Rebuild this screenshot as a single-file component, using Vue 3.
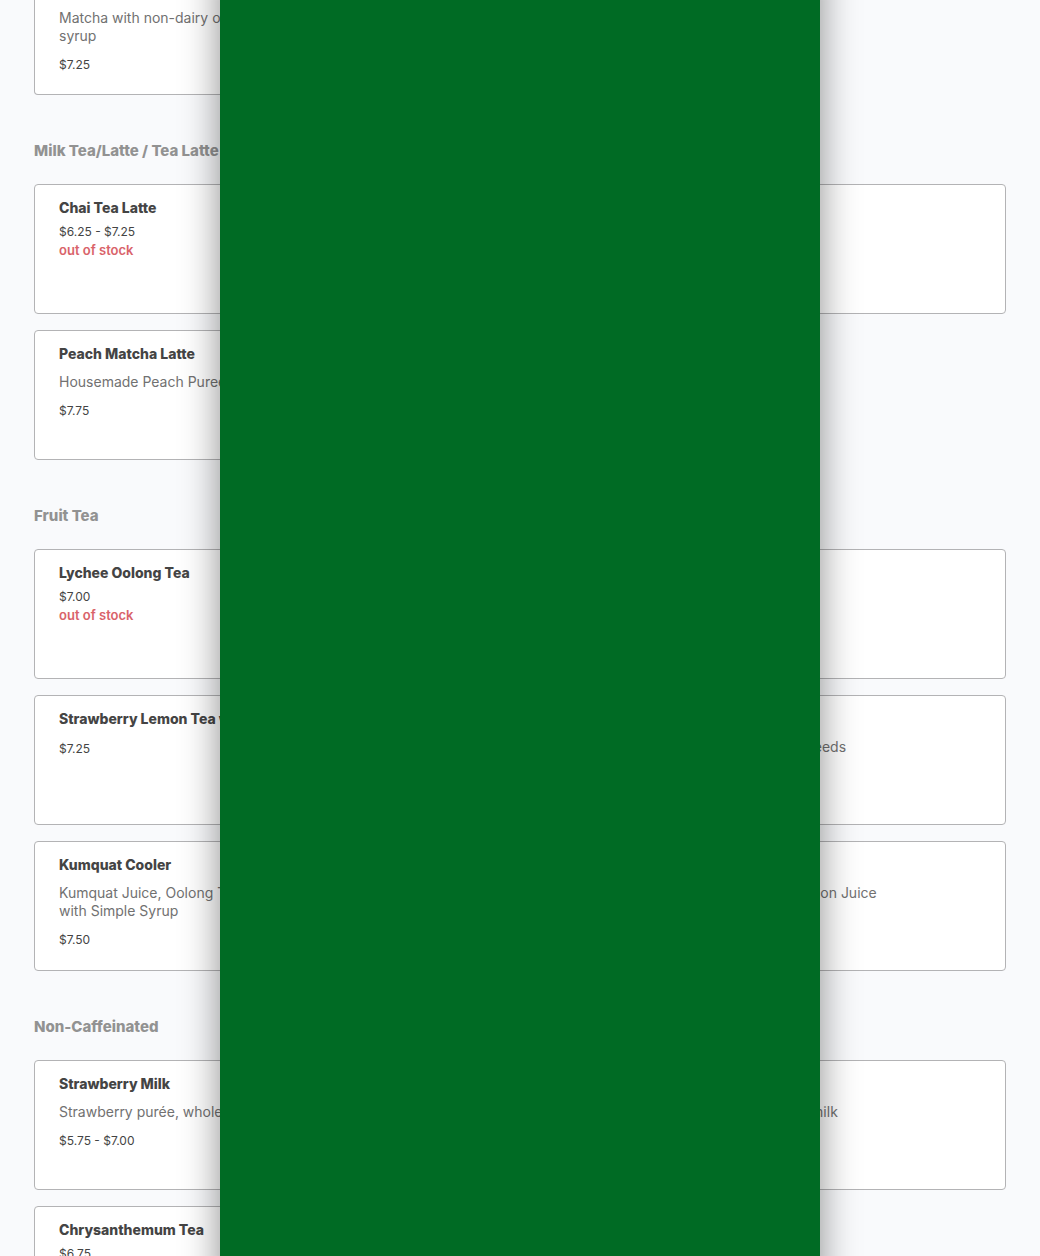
<script setup>
const sections = [
  {
    title: '',
    items: [{ continued: true, desc: 'Matcha with non-dairy oat milk and\nsyrup', price: '$7.25' }],
  },
  {
    title: 'Milk Tea/Latte / Tea Latte',
    items: [
      { name: 'Chai Tea Latte', price: '$6.25 - $7.25', soldOut: true },
      {},
      { name: 'Peach Matcha Latte', desc: 'Housemade Peach Puree', price: '$7.75' },
    ],
  },
  {
    title: 'Fruit Tea',
    items: [
      { name: 'Lychee Oolong Tea', price: '$7.00', soldOut: true },
      {},
      { name: 'Strawberry Lemon Tea with', desc: '', price: '$7.25' },
      { desc: 'Passion Fruit, Green Tea, with Lychee Seeds' },
      { name: 'Kumquat Cooler', desc: 'Kumquat Juice, Oolong Tea\nwith Simple Syrup', price: '$7.50' },
      { desc: 'Butterfly Pea Flower Tea, and Fresh Lemon Juice' },
    ],
  },
  {
    title: 'Non-Caffeinated',
    items: [
      { name: 'Strawberry Milk', desc: 'Strawberry purée, whole milk', price: '$5.75 - $7.00' },
      { desc: 'Housemade Banana purée, with whole milk' },
      { name: 'Chrysanthemum Tea', price: '$6.75' },
    ],
  },
]
</script>

<template>
  <div class="page">
    <main class="menu">
      <section v-for="(section, s) in sections" :key="s">
        <h2 v-if="section.title" class="section-title">{{ section.title }}</h2>
        <div class="grid">
          <article
            v-for="(item, i) in section.items"
            :key="i"
            class="card"
            :class="{ continued: item.continued }"
          >
            <h3 v-if="!item.continued" class="name">{{ item.name }}</h3>
            <p v-if="item.desc !== undefined" class="desc">{{ item.desc }}</p>
            <p v-if="item.price" class="price">{{ item.price }}</p>
            <p v-if="item.soldOut" class="stock">out of stock</p>
          </article>
        </div>
      </section>
    </main>
    <div class="panel" role="dialog" aria-label="Menu panel"></div>
  </div>
</template>

<style>
body {
  margin: 0;
  background: #f9fafc;
}
</style>

<style scoped>
.page {
  height: 100vh;
  overflow: hidden;
  background: #f9fafc;
  font-family: Inter, "Open Sans", sans-serif;
}
.menu {
  padding: 0 34px;
}
.section-title {
  margin: 44px 0 21px;
  font-size: 15px;
  line-height: 24px;
  font-weight: 800;
  color: #929292;
  white-space: nowrap;
}
.grid {
  display: grid;
  grid-template-columns: repeat(2, minmax(0, 1fr));
  gap: 16px;
}
.card {
  box-sizing: border-box;
  min-height: 130px;
  padding: 13px 24px;
  border: 1px solid #b3b3b5;
  border-radius: 4px;
  background: #fff;
}
.card.continued {
  min-height: 95px;
  padding-top: 0;
  border-top: 0;
  border-radius: 0 0 4px 4px;
}
.name {
  min-height: 20px;
  margin: 0 0 4px;
  font-size: 14px;
  line-height: 20px;
  font-weight: 800;
  color: #444;
  white-space: nowrap;
}
.desc {
  margin: 9px 0 10px;
  font-size: 14px;
  line-height: 18px;
  color: #717171;
  white-space: pre-line;
}
.price,
.stock {
  margin: 0;
  font-size: 12px;
  line-height: 19px;
  color: #444;
}
.stock {
  font-size: 13px;
  font-weight: 600;
  color: #d9636a;
}
.panel {
  position: fixed;
  top: -40px;
  bottom: -40px;
  left: 50%;
  width: 600px;
  max-width: 100%;
  transform: translateX(-50%);
  background: #006b24;
  box-shadow: 0 0 36px rgba(0, 0, 0, 0.45);
}
</style>
